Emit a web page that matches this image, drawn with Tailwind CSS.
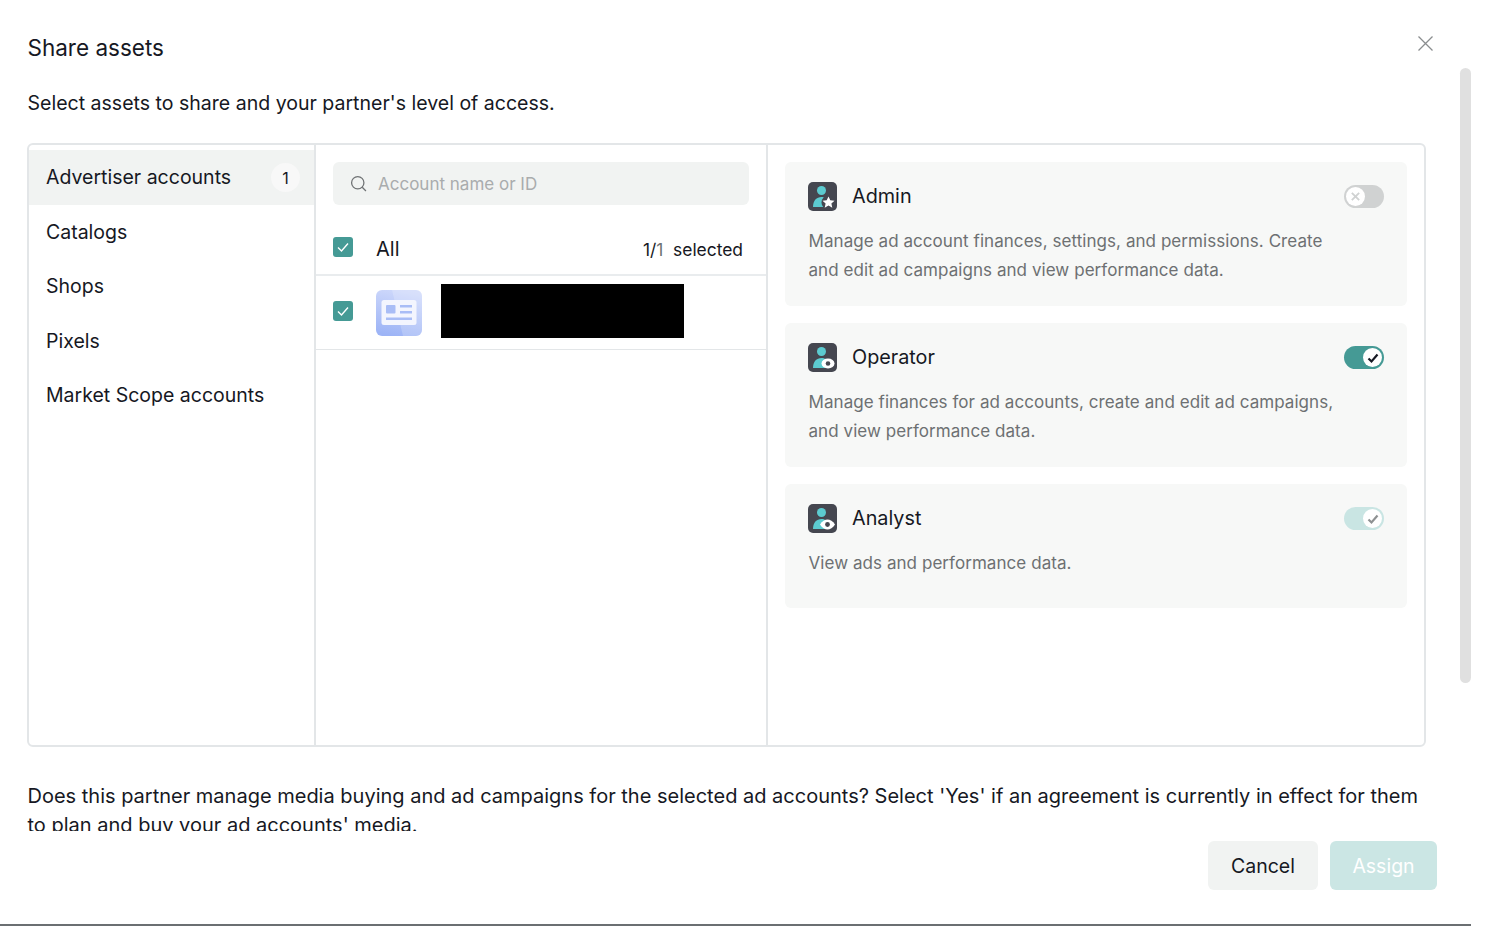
<!DOCTYPE html>
<html lang="en">
  <head>
    <meta charset="UTF-8" />
    <title>Share assets</title>
    <script src="https://cdn.jsdelivr.net/npm/@tailwindcss/browser@4"></script>
  </head>
  <body class="bg-white text-[#161823] font-['Inter',sans-serif] overflow-hidden">
    <div class="relative w-[1488px] h-[926px] overflow-hidden">
      <div class="relative w-[1471px] h-[926px] border-b-2 border-[#6b6f72] flex flex-col">
        <!-- close -->
        <button class="absolute left-[1418px] top-[36px] w-[15px] h-[15px]">
          <svg viewBox="0 0 15 15" class="w-[15px] h-[15px]" fill="none" stroke="#8a8d8f" stroke-width="1.3"><path d="M0.5 0.5L14.5 14.5M14.5 0.5L0.5 14.5" /></svg>
        </button>

        <!-- scrollbar -->
        <div class="absolute left-[1460px] top-[68px] w-[11px] h-[615px] rounded-full bg-[#e0e0e0]"></div>

        <div class="h-[831px] overflow-hidden pl-[27px] pr-[45px]">
          <h1 class="pt-[34px] ml-[0.5px] text-[22.5px] leading-[28px] font-normal">Share assets</h1>
          <p class="mt-[27px] ml-[0.5px] text-[19.55px] leading-[28px]">Select assets to share and your partner's level of access.</p>

          <div class="mt-[26px] w-[1399px] h-[604px] flex border-2 border-[#e3e6e8] rounded-[6px] overflow-hidden">
            <!-- asset types -->
            <div class="w-[287px] shrink-0 pt-[5px] border-r-2 border-[#e3e6e8] text-[19.5px]">
              <div class="h-[55px] pl-[17px] pr-[14px] flex items-center justify-between bg-[#f1f3f2]">
                <span>Advertiser accounts</span>
                <span class="w-[29px] h-[29px] rounded-full bg-[#f8f8f8] flex items-center justify-center text-[16px]">1</span>
              </div>
              <div class="h-[54.5px] pl-[17px] flex items-center">Catalogs</div>
              <div class="h-[54.5px] pl-[17px] flex items-center">Shops</div>
              <div class="h-[54.5px] pl-[17px] flex items-center">Pixels</div>
              <div class="h-[54.5px] pl-[17px] flex items-center">Market Scope accounts</div>
            </div>

            <!-- accounts -->
            <div class="w-[452px] shrink-0 border-r-2 border-[#e3e6e8]">
              <div class="ml-[17px] mt-[17px] h-[43px] rounded-[6px] bg-[#f1f3f2] flex items-center pl-[17px] gap-[11px] w-[416px]">
                <svg viewBox="0 0 16 16" class="w-[17px] h-[17px]" fill="none" stroke="#6f7274" stroke-width="1.2"><circle cx="7.3" cy="7.3" r="5.8" /><path d="M11.5 11.5L15 15" /></svg>
                <span class="pt-[2px] text-[17px] text-[#a9acad]">Account name or ID</span>
              </div>
              <div class="h-[71px] pt-[18px] pl-[17px] pr-[23px] flex items-center border-b-2 border-[#e9ecee]">
                <span class="w-[20px] h-[20px] -mt-[3px] rounded-[3px] bg-[#459a95] flex items-center justify-center">
                  <svg viewBox="0 0 14 14" class="w-[14px] h-[14px]" fill="none" stroke="#fff" stroke-width="1.4"><path d="M2 7.5L5.5 11L12 3.5" /></svg>
                </span>
                <span class="ml-[23px] text-[20px]">All</span>
                <span class="ml-auto pt-[3px] text-[17.4px]">1/<span class="text-[#6f7274]">1</span>&nbsp; selected</span>
              </div>
              <div class="h-[74px] pb-[4px] pl-[17px] flex items-center border-b border-[#e3e6e8]">
                <span class="w-[20px] h-[20px] rounded-[3px] bg-[#459a95] flex items-center justify-center">
                  <svg viewBox="0 0 14 14" class="w-[14px] h-[14px]" fill="none" stroke="#fff" stroke-width="1.4"><path d="M2 7.5L5.5 11L12 3.5" /></svg>
                </span>
                <svg viewBox="0 0 46 46" class="ml-[23px] mt-[4px] w-[46px] h-[46px]">
                  <defs>
                    <linearGradient id="tile" x1="0.6" y1="0" x2="0.4" y2="1"><stop offset="0" stop-color="#cfd9fb" /><stop offset="1" stop-color="#9db4f6" /></linearGradient>
                  </defs>
                  <rect width="46" height="46" rx="6" fill="url(#tile)" />
                  <path d="M16 0H40a6 6 0 0 1 6 6V40a6 6 0 0 1-6 6H27Z" fill="#fff" fill-opacity="0.2" />
                  <rect x="5.5" y="10" width="35" height="25" rx="2.5" fill="#f3f5fe" />
                  <rect x="10" y="15" width="9.5" height="8.5" rx="1" fill="#a9bdf6" />
                  <rect x="24" y="15" width="12" height="2.5" fill="#a9bdf6" />
                  <rect x="24" y="21" width="12" height="2.5" fill="#a9bdf6" />
                  <rect x="10" y="27.5" width="26" height="2.5" fill="#a9bdf6" />
                </svg>
                <div class="ml-[19px] w-[243px] h-[54px] bg-black"></div>
              </div>
            </div>

            <!-- roles -->
            <div class="flex-1 px-[17px] pt-[17px] flex flex-col gap-[17px]">
              <div class="h-[144px] rounded-[6px] bg-[#f7f8f7] px-[23px] pt-[20px]">
                <div class="flex items-center h-[29px]">
                  <svg viewBox="0 0 29 29" class="w-[29px] h-[29px]">
                    <rect width="29" height="29" rx="5" fill="#454750" />
                    <circle cx="13.5" cy="8.5" r="4.5" fill="#5ccbd0" />
                    <path d="M5 25c0-6.5 3.5-10 8.5-10 1.6 0 3 .3 3.5.9V25Z" fill="#5ccbd0" />
                    <circle cx="20.5" cy="20.5" r="7" fill="#454750" />
                    <path d="M20.5 14.5l1.8 3.8 4.2.5-3.1 2.8.9 4.1-3.8-2.1-3.8 2.1.9-4.1-3.1-2.8 4.2-.5Z" fill="#fff" />
                  </svg>
                  <span class="ml-[15px] text-[19.8px]">Admin</span>
                  <span class="ml-auto w-[40px] h-[23px] rounded-full bg-[#d0d2d2] flex items-center pl-[2px]">
                    <span class="w-[19px] h-[19px] rounded-full bg-white flex items-center justify-center">
                      <svg viewBox="0 0 12 12" class="w-[11px] h-[11px]" fill="none" stroke="#d0d2d2" stroke-width="2"><path d="M2 2L10 10M10 2L2 10" /></svg>
                    </span>
                  </span>
                </div>
                <p class="mt-[16px] ml-[0.5px] text-[17px] leading-[29px] tracking-[0.06px] text-[#6d7072] max-w-[535px]">Manage ad account finances, settings, and permissions. Create and edit ad campaigns and view performance data.</p>
              </div>

              <div class="h-[144px] rounded-[6px] bg-[#f7f8f7] px-[23px] pt-[20px]">
                <div class="flex items-center h-[29px]">
                  <svg viewBox="0 0 29 29" class="w-[29px] h-[29px]">
                    <rect width="29" height="29" rx="5" fill="#454750" />
                    <circle cx="13.5" cy="8.5" r="4.5" fill="#5ccbd0" />
                    <path d="M5 25c0-6.5 3.5-10 8.5-10 1.6 0 3 .3 3.5.9V25Z" fill="#5ccbd0" />
                    <ellipse cx="20" cy="20.5" rx="6.5" ry="5" fill="#fff" />
                    <circle cx="20" cy="20.5" r="2.3" fill="#454750" />
                  </svg>
                  <span class="ml-[15px] text-[19.8px]">Operator</span>
                  <span class="ml-auto w-[40px] h-[23px] rounded-full bg-[#459a95] flex items-center justify-end pr-[2px]">
                    <span class="w-[19px] h-[19px] rounded-full bg-white flex items-center justify-center">
                      <svg viewBox="0 0 12 12" class="w-[12px] h-[12px]" fill="none" stroke="#161823" stroke-width="2.2"><path d="M1.5 6.5L4.5 9.5L10.5 2.5" /></svg>
                    </span>
                  </span>
                </div>
                <p class="mt-[16px] ml-[0.5px] text-[17px] leading-[29px] tracking-[0.06px] text-[#6d7072] max-w-[535px]">Manage finances for ad accounts, create and edit ad campaigns, and view performance data.</p>
              </div>

              <div class="h-[124px] rounded-[6px] bg-[#f7f8f7] px-[23px] pt-[20px]">
                <div class="flex items-center h-[29px]">
                  <svg viewBox="0 0 29 29" class="w-[29px] h-[29px]">
                    <rect width="29" height="29" rx="5" fill="#454750" />
                    <circle cx="13.5" cy="8.5" r="4.5" fill="#5ccbd0" />
                    <path d="M5 25c0-6.5 3.5-10 8.5-10 1.6 0 3 .3 3.5.9V25Z" fill="#5ccbd0" />
                    <path d="M12 20.5c2-3.4 5-5 7.5-5s5.5 1.6 7.5 5c-2 3.4-5 5-7.5 5s-5.5-1.6-7.5-5Z" fill="#fff" />
                    <circle cx="19.5" cy="20.5" r="2.4" fill="#454750" />
                  </svg>
                  <span class="ml-[15px] text-[19.8px]">Analyst</span>
                  <span class="ml-auto w-[40px] h-[23px] rounded-full bg-[#c9e5e3] flex items-center justify-end pr-[2px]">
                    <span class="w-[19px] h-[19px] rounded-full bg-white flex items-center justify-center">
                      <svg viewBox="0 0 12 12" class="w-[12px] h-[12px]" fill="none" stroke="#8e9192" stroke-width="2.2"><path d="M1.5 6.5L4.5 9.5L10.5 2.5" /></svg>
                    </span>
                  </span>
                </div>
                <p class="mt-[16px] ml-[0.5px] text-[17px] leading-[29px] tracking-[0.06px] text-[#6d7072]">View ads and performance data.</p>
              </div>
            </div>
          </div>

          <p class="mt-[35px] ml-[0.5px] w-[1399px] text-[20px] leading-[29px]">Does this partner manage media buying and ad campaigns for the selected ad accounts? Select 'Yes' if an agreement is currently in effect for them to plan and buy your ad accounts' media.</p>
        </div>

        <!-- footer -->
        <div class="pt-[10px] pr-[34px] flex justify-end gap-[12px]">
          <button class="w-[110px] h-[49px] pt-[2px] rounded-[6px] bg-[#f1f3f2] text-[19.5px]">Cancel</button>
          <button class="w-[107px] h-[49px] pt-[2px] rounded-[6px] bg-[#cbe6e4] text-[19.5px] text-white">Assign</button>
        </div>
      </div>
    </div>
  </body>
</html>
